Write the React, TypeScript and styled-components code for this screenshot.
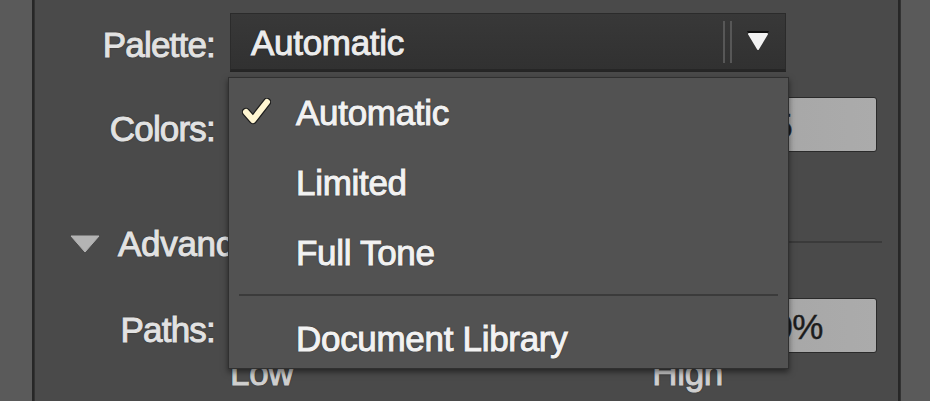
import React from "react";
import styled, { createGlobalStyle } from "styled-components";

const GlobalStyle = createGlobalStyle`
  html, body {
    margin: 0;
    padding: 0;
    background: #5a5a5a;
    overflow: hidden;
  }
  body {
    font-family: "Liberation Sans", Arial, sans-serif;
  }
`;

const Frame = styled.div`
  display: flex;
  width: 930px;
  height: 401px;
`;

const SideStrip = styled.div<{ $w: number }>`
  width: ${(p) => p.$w}px;
  background: #5a5a5a;
`;

const Divider = styled.div`
  width: 3px;
  background: #272727;
  box-shadow: inset -1px 0 0 #333;
`;

const Panel = styled.div`
  flex: 1;
  display: flex;
  flex-direction: column;
  background: #4a4a4a;
  padding: 13px 21px 0 0;
  font-size: 35px;
  letter-spacing: -0.3px;
  color: #e2e2e2;
`;

const FormRow = styled.div<{ $top?: number }>`
  display: grid;
  grid-template-columns: 180px 1fr;
  column-gap: 15px;
  margin-top: ${(p) => p.$top ?? 0}px;
`;

const Label = styled.div`
  text-align: right;
  line-height: 39px;
  padding-top: 12px;
  letter-spacing: -0.8px;
  -webkit-text-stroke: 1px #e2e2e2;
  text-shadow: 0 0 2px rgba(0, 0, 0, 0.7);
  white-space: nowrap;
`;

const SelectWrap = styled.div`
  position: relative;
  width: 556px;
`;

const Select = styled.div`
  display: flex;
  align-items: center;
  height: 55px;
  padding: 0 16px 0 20px;
  background: linear-gradient(#383838, #313131);
  border: 1px solid #2b2b2b;
  border-bottom: 3px solid #262626;
`;

const SelectText = styled.div`
  flex: 1;
  line-height: 39px;
  padding-top: 2px;
  color: #ececec;
  -webkit-text-stroke: 1px #ececec;
  text-shadow: 0 0 2px rgba(0, 0, 0, 0.8);
`;

const DoubleRule = styled.div`
  width: 5px;
  height: 42px;
  border-left: 2px solid #575757;
  border-right: 2px solid #575757;
  margin-right: 15px;
`;

const Menu = styled.div`
  position: absolute;
  z-index: 10;
  top: calc(100% + 5px);
  left: -2px;
  right: -3px;
  height: 290px;
  overflow: hidden;
  background: #525252;
  border: 1px solid #303030;
  box-shadow: 0 3px 6px rgba(0, 0, 0, 0.5);
`;

const MenuItem = styled.div`
  display: flex;
  align-items: center;
  height: 70px;
  line-height: 70px;
  color: #f2f2f2;
  -webkit-text-stroke: 1px #f2f2f2;
  text-shadow: 0 0 2px rgba(0, 0, 0, 0.7);
  white-space: nowrap;
`;

const CheckSlot = styled.div`
  display: flex;
  align-items: center;
  width: 54px;
  padding-left: 13px;
  margin-top: -4px;
`;

const MenuSeparator = styled.div`
  height: 2px;
  margin: 6px 10px 8px 10px;
  background: #3b3b3b;
`;

const ControlRow = styled.div`
  display: grid;
  grid-template-columns: 1fr 132px;
  column-gap: 25px;
  align-items: center;
`;

const SliderTrack = styled.div`
  height: 6px;
  background: #2e2e2e;
  border-radius: 3px;
`;

const Field = styled.div`
  height: 45px;
  padding: 8px 8px 0 8px;
  line-height: 39px;
  background: linear-gradient(90deg, #a6a6a6, #ababab);
  border: 1px solid #2a2a2a;
  border-radius: 3px;
  color: #1c1c1c;
  -webkit-text-stroke: 0.4px #1c1c1c;
`;

const SectionRow = styled.div`
  display: flex;
  align-items: center;
  margin: 72px -5px 0 0;
  padding-left: 35px;
  line-height: 39px;
`;

const SectionTitle = styled.div`
  margin-left: 18px;
  -webkit-text-stroke: 1px #e2e2e2;
  text-shadow: 0 0 2px rgba(0, 0, 0, 0.7);
`;

const SectionLine = styled.div`
  flex: 1;
  height: 2px;
  margin: -3px 0 0 14px;
  background: #3a3a3a;
`;

const RangeLabels = styled.div`
  display: flex;
  justify-content: space-between;
  line-height: 39px;
  color: #cfcfcf;
  -webkit-text-stroke: 1px #cfcfcf;
  text-shadow: 0 0 2px rgba(0, 0, 0, 0.7);
  margin-right: -3px;
`;

function CheckIcon() {
  return (
    <svg width="29" height="27" viewBox="0 0 29 27">
      <polyline
        points="4,14 11,22 25,4"
        fill="none"
        stroke="rgba(0,0,0,0.65)"
        strokeWidth="8.5"
        strokeLinecap="round"
        strokeLinejoin="round"
      />
      <polyline
        points="4,14 11,22 25,4"
        fill="none"
        stroke="#fff6d2"
        strokeWidth="6"
        strokeLinecap="round"
        strokeLinejoin="round"
      />
    </svg>
  );
}

function ArrowIcon() {
  return (
    <svg width="22" height="21" viewBox="0 0 22 21">
      <polygon points="0,0 22,0 11,18" fill="#111" />
      <polygon
        points="2,3 20,3 11,18"
        fill="#f2f2f2"
        stroke="#f2f2f2"
        strokeWidth="2"
        strokeLinejoin="round"
      />
    </svg>
  );
}

function DisclosureIcon() {
  return (
    <svg width="30" height="18" viewBox="0 0 30 18">
      <polygon points="1,1 29,1 15,17" fill="#b4b4b4" stroke="#b4b4b4" strokeLinejoin="round" />
    </svg>
  );
}

const paletteOptions = ["Automatic", "Limited", "Full Tone"];

export default function App() {
  const selected = "Automatic";

  return (
    <>
      <GlobalStyle />
      <Frame>
        <SideStrip $w={32} />
        <Divider />
        <Panel>
          <FormRow>
            <Label>Palette:</Label>
            <SelectWrap>
              <Select>
                <SelectText>{selected}</SelectText>
                <DoubleRule />
                <ArrowIcon />
              </Select>
              <Menu>
                {paletteOptions.map((opt) => (
                  <MenuItem key={opt}>
                    <CheckSlot>{opt === selected && <CheckIcon />}</CheckSlot>
                    {opt}
                  </MenuItem>
                ))}
                <MenuSeparator />
                <MenuItem>
                  <CheckSlot />
                  Document Library
                </MenuItem>
              </Menu>
            </SelectWrap>
          </FormRow>

          <FormRow $top={25}>
            <Label>Colors:</Label>
            <ControlRow>
              <SliderTrack />
              <Field>25</Field>
            </ControlRow>
          </FormRow>

          <SectionRow>
            <DisclosureIcon />
            <SectionTitle>Advanced</SectionTitle>
            <SectionLine />
          </SectionRow>

          <FormRow $top={35}>
            <Label>Paths:</Label>
            <ControlRow>
              <SliderTrack />
              <Field>50%</Field>
            </ControlRow>
          </FormRow>

          <FormRow $top={0}>
            <div />
            <ControlRow>
              <RangeLabels>
                <span>Low</span>
                <span>High</span>
              </RangeLabels>
              <div />
            </ControlRow>
          </FormRow>
        </Panel>
        <Divider />
        <SideStrip $w={29} />
      </Frame>
    </>
  );
}
